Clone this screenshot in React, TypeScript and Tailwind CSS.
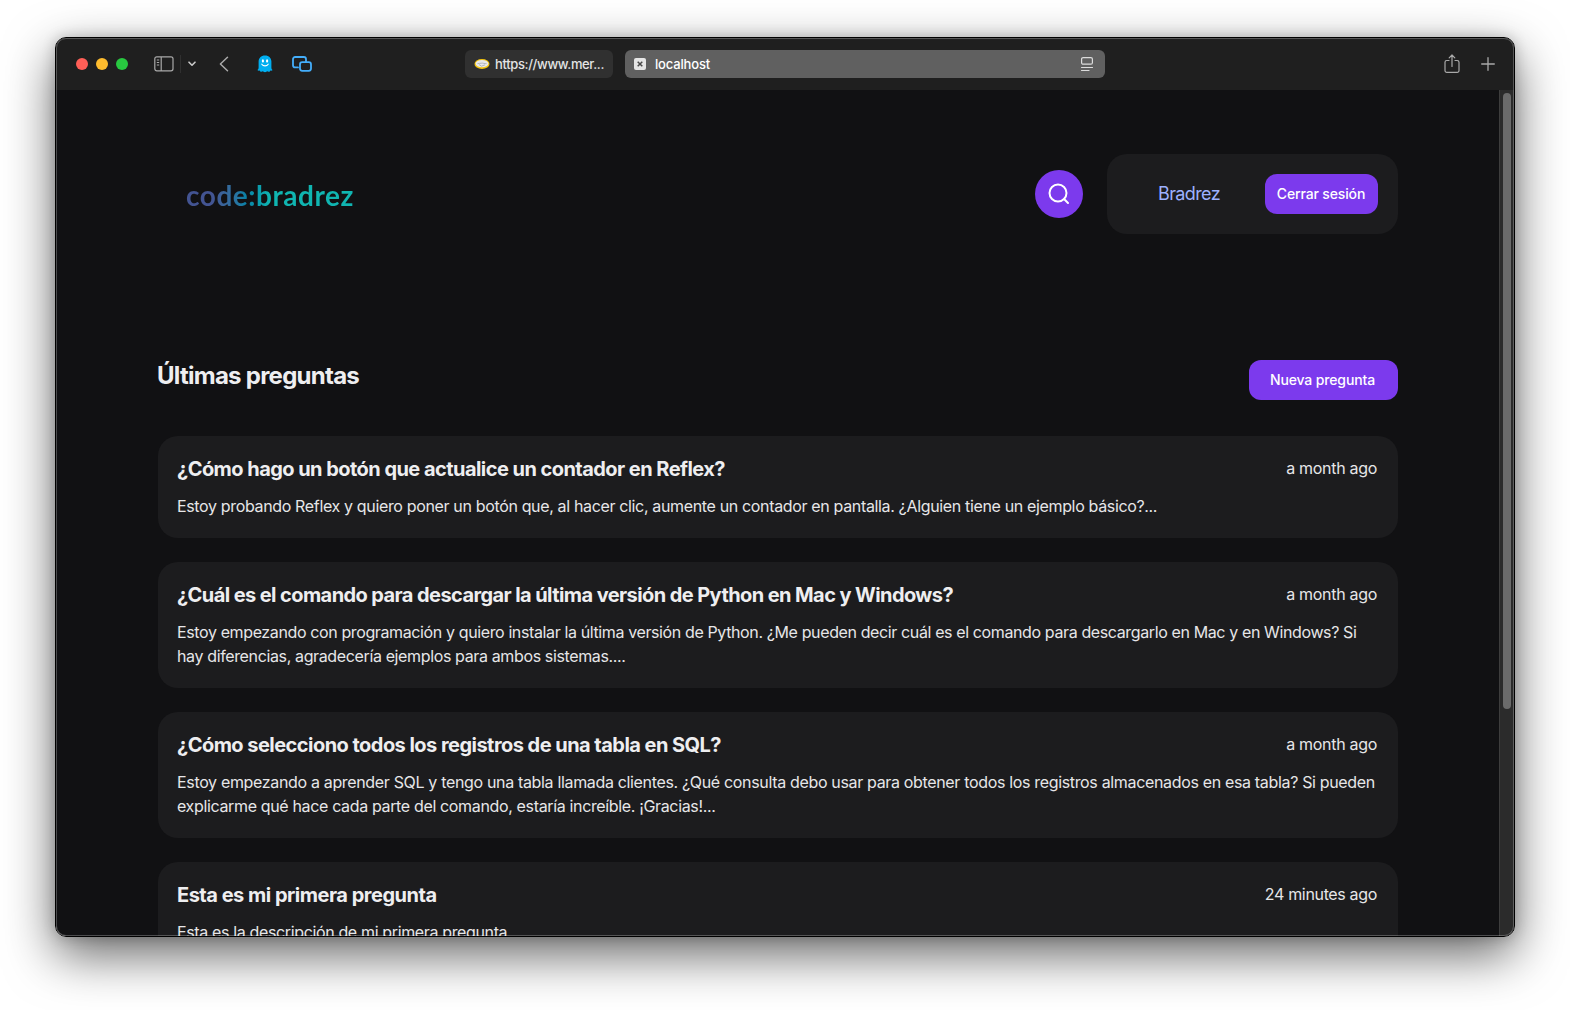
type Line = { text: string; tracking: string };
type Question = { title: Line; date: Line; body: Line[] };

const questions: Question[] = [
  {
    title: { text: '¿Cómo hago un botón que actualice un contador en Reflex?', tracking: 'tracking-[-0.545px]' },
    date: { text: 'a month ago', tracking: 'tracking-[-0.3px]' },
    body: [
      {
        text: 'Estoy probando Reflex y quiero poner un botón que, al hacer clic, aumente un contador en pantalla. ¿Alguien tiene un ejemplo básico?...',
        tracking: 'tracking-[-0.348px]',
      },
    ],
  },
  {
    title: {
      text: '¿Cuál es el comando para descargar la última versión de Python en Mac y Windows?',
      tracking: 'tracking-[-0.587px]',
    },
    date: { text: 'a month ago', tracking: 'tracking-[-0.3px]' },
    body: [
      {
        text: 'Estoy empezando con programación y quiero instalar la última versión de Python. ¿Me pueden decir cuál es el comando para descargarlo en Mac y en Windows? Si',
        tracking: 'tracking-[-0.38px]',
      },
      { text: 'hay diferencias, agradecería ejemplos para ambos sistemas....', tracking: 'tracking-[-0.367px]' },
    ],
  },
  {
    title: { text: '¿Cómo selecciono todos los registros de una tabla en SQL?', tracking: 'tracking-[-0.537px]' },
    date: { text: 'a month ago', tracking: 'tracking-[-0.3px]' },
    body: [
      {
        text: 'Estoy empezando a aprender SQL y tengo una tabla llamada clientes. ¿Qué consulta debo usar para obtener todos los registros almacenados en esa tabla? Si pueden',
        tracking: 'tracking-[-0.337px]',
      },
      {
        text: 'explicarme qué hace cada parte del comando, estaría increíble. ¡Gracias!...',
        tracking: 'tracking-[-0.35px]',
      },
    ],
  },
  {
    title: { text: 'Esta es mi primera pregunta', tracking: 'tracking-[-0.494px]' },
    date: { text: '24 minutes ago', tracking: 'tracking-[-0.34px]' },
    body: [{ text: 'Esta es la descripción de mi primera pregunta', tracking: 'tracking-[-0.36px]' }],
  },
];

function Toolbar() {
  return (
    <header className="relative flex h-[52px] shrink-0 items-center bg-[#1f1f1f] pb-px pl-5 pr-[19px] text-[#a9a9a9]">
      <div className="flex gap-2">
        <i className="size-3 rounded-full bg-[#ff5f57]" />
        <i className="size-3 rounded-full bg-[#febc2e]" />
        <i className="size-3 rounded-full bg-[#28c840]" />
      </div>
      <svg className="ml-[26px]" width="20" height="16" viewBox="0 0 20 16" fill="none" stroke="currentColor" strokeWidth="1.2">
        <rect x="0.8" y="0.8" width="18.2" height="14" rx="2" />
        <path d="M7.2 1v14M2.8 4h2.4M2.8 6.5h2.4M2.8 9h2.4" />
      </svg>
      <i className="ml-[6px] h-[18px] w-px bg-[#303030]" />
      <svg className="ml-[7px]" width="8" height="6" viewBox="0 0 8 6" fill="none" stroke="#c8c8c8" strokeWidth="1.6" strokeLinecap="round" strokeLinejoin="round">
        <path d="M1 1.2l3 3 3-3" />
      </svg>
      <svg className="ml-[23px]" width="10" height="16" viewBox="0 0 10 16" fill="none" stroke="currentColor" strokeWidth="1.5" strokeLinecap="round" strokeLinejoin="round">
        <path d="M8.500 1.200L1.400 8l7.100 6.800" />
      </svg>
      <svg className="ml-[28px]" width="16" height="18" viewBox="0 0 16 18">
        <path
          d="M8 .4c4 0 6.400 2.600 6.400 6.200v6c0 1 .2 1.800 1.200 2.400-.6.7-1.400.8-2.200.5-.4 1-1.100 1.500-1.900 1.200-.5-.2-.8-.4-1.200-.4-.6 0-1.300.9-2.300.9s-1.700-.9-2.300-.9c-.4 0-.7.2-1.200.4-.8.3-1.500-.2-1.900-1.200-.8.3-1.600.2-2.200-.5 1-.6 1.200-1.400 1.200-2.400v-6C1.600 3 4 .4 8 .4z"
          fill="#00aef0"
        />
        <ellipse cx="5.900" cy="5.900" rx="1.100" ry="1.700" fill="#fff" />
        <ellipse cx="10.100" cy="5.900" rx="1.100" ry="1.700" fill="#fff" />
        <path d="M4.800 9.200c1.500 2.200 4.900 2.200 6.400 0" fill="none" stroke="#fff" strokeWidth="1.100" strokeLinecap="round" />
      </svg>
      <svg className="ml-[19px]" width="20" height="16" viewBox="0 0 20 16" fill="none" stroke="#44aefb" strokeWidth="1.800" strokeLinecap="round" strokeLinejoin="round">
        <path d="M6 11.400H3.200A2.200 2.200 0 0 1 1 9.200V3.200A2.200 2.200 0 0 1 3.200 1h8.600A2.200 2.200 0 0 1 14 3.200V5.400" />
        <rect x="8" y="6.200" width="11" height="8.600" rx="2.200" />
      </svg>
      <div className="absolute left-[409px] top-3 flex gap-3">
        <div className="flex h-7 w-[148px] items-center rounded-md bg-[#303030] pl-[9px]">
          <svg width="16" height="12" viewBox="0 0 16 12">
            <ellipse cx="8" cy="6" rx="7.500" ry="5" fill="#f3c512" />
            <ellipse cx="8" cy="5.600" rx="6.400" ry="3.700" fill="#e9e9ea" />
            <path d="M3.500 5.600c1.500.2 2.500-.6 3.700-.4 1.700-.4 3.500.7 5.300.4M5 6.500l2.500 1.700 3.500-1.400" fill="none" stroke="#9aa0ab" strokeWidth=".7" />
          </svg>
          <span className="ml-[5px] mt-0.5 text-[13px] font-medium tracking-[-0.36px] text-[#e4e4e4]">https://www.mer...</span>
        </div>
        <div className="flex h-7 w-[480px] items-center rounded-md bg-[#606060] pl-[9px] pr-[11px]">
          <svg width="12" height="12" viewBox="0 0 12 12">
            <rect width="12" height="12" rx="2" fill="#e6e6e6" />
            <path d="M3.700 3.700l4.600 4.600M8.300 3.700L3.700 8.300" stroke="#4a4a4a" strokeWidth="1.500" />
          </svg>
          <span className="ml-[9px] mt-0.5 text-[13px] font-medium tracking-[-0.17px] text-white">localhost</span>
          <svg className="ml-auto" width="14" height="16" viewBox="0 0 14 16" fill="none" stroke="#dcdcdc" strokeWidth="1.200" strokeLinecap="round">
            <rect x="1.600" y="1.600" width="10.800" height="6.600" rx="1.500" />
            <path d="M1.500 11.500h11M1.500 14.500h7.500" />
          </svg>
        </div>
      </div>
      <svg className="ml-auto" width="16" height="20" viewBox="0 0 16 20" fill="none" stroke="currentColor" strokeWidth="1.200" strokeLinecap="round" strokeLinejoin="round">
        <path d="M5 6.500H2.800A1.800 1.800 0 0 0 1 8.300v8.300a1.800 1.800 0 0 0 1.800 1.800h10.400a1.800 1.800 0 0 0 1.800-1.800V8.300a1.800 1.800 0 0 0-1.800-1.800H11M8 12.500V1.200M5.200 3.800L8 1l2.800 2.800" />
      </svg>
      <svg className="ml-[21px]" width="14" height="14" viewBox="0 0 14 14" stroke="currentColor" strokeWidth="1.300" strokeLinecap="round">
        <path d="M7 .7v12.600M.7 7h12.600" />
      </svg>
    </header>
  );
}

function Card({ q }: { q: Question }) {
  return (
    <article className="rounded-[20px] bg-[#1c1c1e] py-5 pl-[19px] pr-[21px] text-[#eeeef0]">
      <div className="flex h-[26px] items-start justify-between">
        <h2 className={`whitespace-nowrap text-[20px] font-bold leading-[26px] ${q.title.tracking}`}>{q.title.text}</h2>
        <time className={`whitespace-nowrap text-base leading-6 text-[#e6e6e8] ${q.date.tracking}`}>{q.date.text}</time>
      </div>
      <div className="mt-3 text-base leading-6 text-[#e6e6e8]">
        {q.body.map((l) => (
          <p key={l.text} className={`whitespace-nowrap ${l.tracking}`}>
            {l.text}
          </p>
        ))}
      </div>
    </article>
  );
}

export default function App() {
  return (
    <div className="flex h-[1010px] w-[1570px] overflow-hidden bg-white pl-[55px] pt-[37px] font-['Inter',sans-serif]">
      <div className="h-[900px] w-[1460px] rounded-[11px] border border-black shadow-[0_18px_50px_rgba(0,0,0,0.6),0_0_14px_rgba(0,0,0,0.2)]">
        <div className="relative flex h-full flex-col overflow-hidden rounded-[10px] bg-[#111113]">
          <Toolbar />
          <div className="flex min-h-0 flex-1">
            <main className="min-w-0 flex-1 overflow-hidden pl-[102px] pr-[101px] pt-16">
              <div className="flex h-20 items-center">
                <span className="ml-[28px] mt-0.5 bg-linear-to-r from-[#435492] from-15% via-[#0b7fa6] via-35% to-[#10b5b1] to-50% bg-clip-text font-['Lato',sans-serif] text-[28px] font-bold leading-10 tracking-[0.54px] text-transparent">
                  code:bradrez
                </span>
                <button className="ml-auto flex size-12 items-center justify-center rounded-full bg-[#7c3aed] text-white">
                  <svg width="24" height="24" viewBox="0 0 24 24" fill="none" stroke="currentColor" strokeWidth="2" strokeLinecap="round">
                    <circle cx="11" cy="11" r="8.500" />
                    <path d="M17.300 17.300L21 21" />
                  </svg>
                </button>
                <div className="ml-6 flex h-20 w-[291px] items-center justify-end rounded-[20px] bg-[#1c1c1e] pr-5">
                  <span className="mb-0.5 mr-[45px] text-[18px] tracking-[-0.62px] text-[#9eb1ff]">Bradrez</span>
                  <button className="h-10 w-[113px] rounded-xl bg-[#7c3aed] pr-px text-sm font-medium tracking-[-0.14px] text-white">
                    Cerrar sesión
                  </button>
                </div>
              </div>
              <div className="mt-[126px] flex h-10 justify-between">
                <h1 className="-ml-px text-2xl font-bold leading-8 tracking-[-0.74px] text-[#eeeef0]">Últimas preguntas</h1>
                <button className="h-10 w-[149px] rounded-xl bg-[#7c3aed] pr-0.5 text-sm font-medium tracking-[-0.14px] text-white">
                  Nueva pregunta
                </button>
              </div>
              <div className="mt-9 flex flex-col gap-6">
                {questions.map((q) => (
                  <Card key={q.title.text} q={q} />
                ))}
              </div>
            </main>
            <div className="w-[15px] shrink-0 border-l border-[#3d3d3d] bg-[#2b2b2b] pl-[3px] pt-[3px]">
              <div className="h-[616px] w-2 rounded-full bg-[#6b6b6b]" />
            </div>
          </div>
          <div className="pointer-events-none absolute inset-0 rounded-[10px] border border-white/25" />
        </div>
      </div>
    </div>
  );
}
